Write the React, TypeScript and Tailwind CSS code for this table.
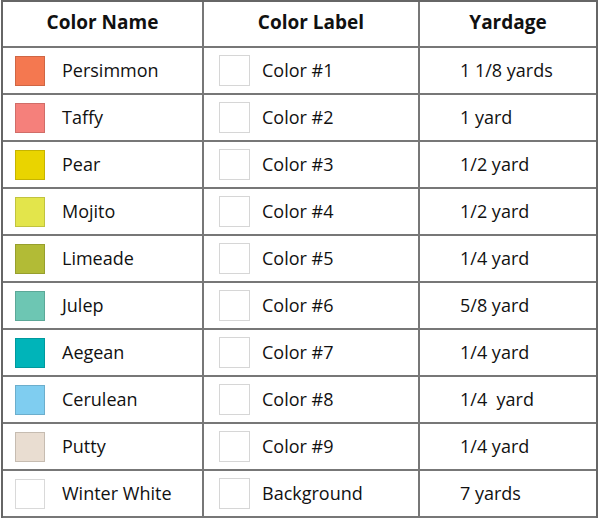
const rows = [
  { name: "Persimmon", swatch: "bg-[#f47850]", label: "Color #1", yard: "1 1/8 yards" },
  { name: "Taffy", swatch: "bg-[#f5807b]", label: "Color #2", yard: "1 yard" },
  { name: "Pear", swatch: "bg-[#e9d400]", label: "Color #3", yard: "1/2 yard" },
  { name: "Mojito", swatch: "bg-[#e3e54b]", label: "Color #4", yard: "1/2 yard" },
  { name: "Limeade", swatch: "bg-[#b2bb36]", label: "Color #5", yard: "1/4 yard" },
  { name: "Julep", swatch: "bg-[#6dc6b3]", label: "Color #6", yard: "5/8 yard" },
  { name: "Aegean", swatch: "bg-[#00b4b9]", label: "Color #7", yard: "1/4 yard" },
  { name: "Cerulean", swatch: "bg-[#7fcdf0]", label: "Color #8", yard: "1/4  yard" },
  { name: "Putty", swatch: "bg-[#e9ddd1]", label: "Color #9", yard: "1/4 yard" },
  { name: "Winter White", swatch: "bg-white", label: "Background", yard: "7 yards" },
];

export default function App() {
  return (
    <div
      className="w-[600px] h-[518px] bg-white text-[#111]"
      style={{ fontFamily: '"Open Sans", "Noto Sans", sans-serif' }}
    >
      <div className="ml-px w-[597px] border-l-2 border-r-2 border-t-2 border-[#666]">
        <div className="grid grid-cols-[201px_216px_176px] h-[46px] border-b-2 border-[#777] text-[19px] font-bold">
          <div className="flex items-center justify-center pb-[4px] border-r-2 border-[#777]">Color Name</div>
          <div className="flex items-center justify-center pb-[4px] border-r-2 border-[#777]">Color Label</div>
          <div className="flex items-center justify-center pb-[4px]">Yardage</div>
        </div>
        {rows.map((r) => (
          <div
            key={r.name}
            className="grid grid-cols-[201px_216px_176px] h-[47px] border-b-2 border-[#777] text-[18px]"
          >
            <div className="flex items-center border-r-2 border-[#777]">
              <span className={`ml-[12px] w-[30px] h-[30px] border border-black/15 ${r.swatch}`} />
              <span className="ml-[17px]">{r.name}</span>
            </div>
            <div className="flex items-center border-r-2 border-[#777]">
              <span className="ml-[15px] w-[31px] h-[31px] border border-[#d6d6d6] bg-white" />
              <span className="ml-[12px]">{r.label}</span>
            </div>
            <div className="flex items-center">
              <span className="ml-[40px] whitespace-pre">{r.yard}</span>
            </div>
          </div>
        ))}
      </div>
    </div>
  );
}
